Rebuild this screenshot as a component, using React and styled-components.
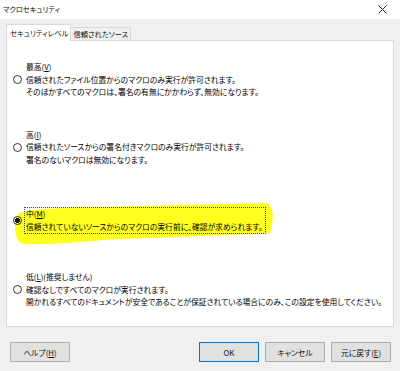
import React from 'react';
import styled, { createGlobalStyle } from 'styled-components';

const GlobalStyle = createGlobalStyle`
  body {
    margin: 0;
    background: #f0f0f0;
    font-family: "Noto Sans CJK JP", "Noto Sans", sans-serif;
    font-feature-settings: 'palt';
    color: #000;
  }
`;

const OPTIONS = [
  {
    label: '最高',
    key: 'V',
    lines: [
      '信頼されたファイル位置からのマクロのみ実行が許可されます。',
      'そのほかすべてのマクロは、署名の有無にかかわらず、無効になります。',
    ],
    top: 20,
  },
  {
    label: '高',
    key: 'I',
    lines: [
      '信頼されたソースからの署名付きマクロのみ実行が許可されます。',
      '署名のないマクロは無効になります。',
    ],
    top: 30,
  },
  {
    label: '中',
    key: 'M',
    lines: ['信頼されていないソースからのマクロの実行前に、確認が求められます。'],
    top: 42,
    checked: true,
  },
  {
    label: '低',
    key: 'L',
    suffix: '(推奨しません)',
    lines: [
      '確認なしですべてのマクロが実行されます。',
      '開かれるすべてのドキュメントが安全であることが保証されている場合にのみ、この設定を使用してください。',
    ],
    top: 38,
  },
];

const Highlight = () => (
  <Marker viewBox="0 0 262 42" width="262" height="42">
    <path
      d="M4 12 C 10 6, 40 5, 90 4 C 150 2, 220 1, 254 0 C 260 4, 262 14, 257 30 C 210 33, 150 34, 90 37 C 60 40, 30 42, 10 41 C 2 38, 0 24, 4 12 Z"
      fill="#ffff1f"
    />
  </Marker>
);

export default function App() {
  return (
    <Window>
      <GlobalStyle />
      <TitleBar>
        <Title>マクロセキュリティ</Title>
        <svg width="9" height="9" viewBox="0 0 9 9">
          <path d="M0.5 0.5 L8.5 8.5 M8.5 0.5 L0.5 8.5" stroke="#222" strokeWidth="1" />
        </svg>
      </TitleBar>
      <Body>
        <TabStrip>
          <Tab $active>セキュリティレベル</Tab>
          <Tab>信頼されたソース</Tab>
        </TabStrip>
        <Panel>
          {OPTIONS.map((o) => (
            <Option key={o.key} $top={o.top}>
              {o.checked && <Highlight />}
              <Radio $checked={o.checked} />
              <Text $focus={o.checked}>
                <Line>
                  {o.label}(<u>{o.key}</u>){o.suffix}
                </Line>
                {o.lines.map((l) => (
                  <Line key={l}>{l}</Line>
                ))}
              </Text>
            </Option>
          ))}
        </Panel>
        <Footer>
          <Button>
            ヘルプ(<u>H</u>)
          </Button>
          <Spacer />
          <Button $default>OK</Button>
          <Button>キャンセル</Button>
          <Button>
            元に戻す(<u>E</u>)
          </Button>
        </Footer>
      </Body>
    </Window>
  );
}

const Window = styled.div`
  width: 400px;
  height: 371px;
  display: flex;
  flex-direction: column;
  overflow: hidden;
`;

const TitleBar = styled.div`
  height: 19px;
  background: #ffffff;
  display: flex;
  align-items: center;
  justify-content: space-between;
  padding: 0 13px 1px 3px;
  box-sizing: border-box;
`;

const Title = styled.span`
  font-size: 7.2px;
  color: #111;
`;

const Body = styled.div`
  flex: 1;
  padding: 5px 6px 0 6px;
  display: flex;
  flex-direction: column;
`;

const TabStrip = styled.div`
  display: flex;
  align-items: flex-end;
  height: 17px;
  position: relative;
  z-index: 1;
  margin-bottom: -1px;
`;

const Tab = styled.div`
  font-size: 7.3px;
  box-sizing: border-box;
  border: 1px solid #d9d9d9;
  border-bottom: ${(p) => (p.$active ? 'none' : '1px solid #d9d9d9')};
  background: ${(p) => (p.$active ? '#ffffff' : '#f0f0f0')};
  height: ${(p) => (p.$active ? '17px' : '14px')};
  padding: ${(p) => (p.$active ? '0 2px 0 3px' : '0 2px')};
  display: flex;
  align-items: center;
  color: #111;
  & + & {
    margin-left: -1px;
  }
`;

const Panel = styled.div`
  width: 388px;
  height: 287px;
  box-sizing: border-box;
  background: #ffffff;
  border: 1px solid #d9d9d9;
  display: flex;
  flex-direction: column;
  padding-left: 6px;
`;

const Option = styled.div`
  position: relative;
  display: flex;
  align-items: center;
  gap: 3px;
  margin-top: ${(p) => p.$top}px;
`;

const Marker = styled.svg`
  position: absolute;
  left: 0;
  top: -5px;
  z-index: 0;
`;

const Radio = styled.span`
  position: relative;
  z-index: 1;
  width: 9px;
  height: 9px;
  box-sizing: border-box;
  border-radius: 50%;
  border: 1px solid #333;
  background: ${(p) =>
    p.$checked ? 'radial-gradient(circle, #111 0 2.3px, transparent 2.6px)' : 'transparent'};
  flex: none;
`;

const Text = styled.div`
  position: relative;
  z-index: 1;
  font-size: 7.8px;
  line-height: 12.5px;
  color: #000;
  padding: 0 2px 0 1px;
  outline: ${(p) => (p.$focus ? '1px dotted #444' : 'none')};
  u {
    text-underline-offset: 1px;
  }
`;

const Line = styled.div`
  white-space: nowrap;
`;

const Footer = styled.div`
  display: flex;
  align-items: center;
  gap: 6px;
  padding: 15px 3px 0 4px;
`;

const Spacer = styled.div`
  flex: 1;
`;

const Button = styled.button`
  width: 60px;
  height: 20px;
  box-sizing: border-box;
  background: #e1e1e1;
  border: 1px solid ${(p) => (p.$default ? '#0078d7' : '#adadad')};
  font-family: inherit;
  font-feature-settings: 'palt';
  font-size: 7.8px;
  color: #111;
  padding: 0;
  display: flex;
  align-items: center;
  justify-content: center;
  u {
    text-underline-offset: 1px;
  }
`;
